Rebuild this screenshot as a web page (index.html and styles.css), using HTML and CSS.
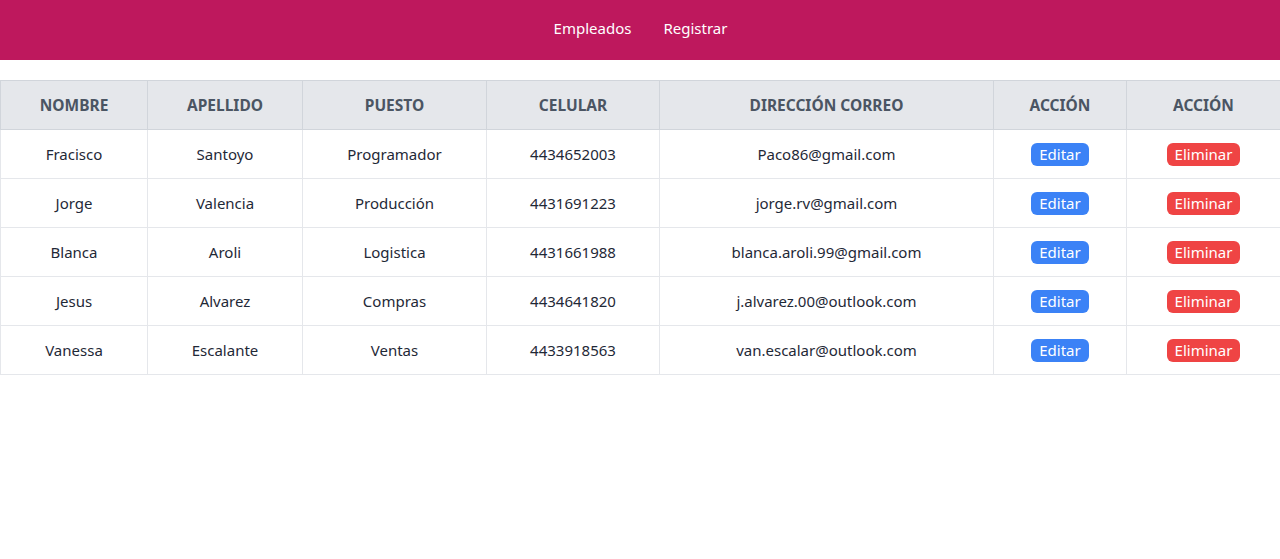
FILE: index.html
```html
<!DOCTYPE html>
<html lang="es">
<head>
<meta charset="utf-8">
<title>Empleados</title>
<link rel="stylesheet" href="styles.css">
</head>
<body>
<header class="topbar">
  <nav class="nav">
    <a class="nav-link" href="#">Empleados</a>
    <a class="nav-link" href="#">Registrar</a>
  </nav>
</header>
<main class="content">
  <table class="grid">
    <colgroup>
      <col class="c1"><col class="c2"><col class="c3"><col class="c4"><col class="c5"><col class="c6"><col class="c7">
    </colgroup>
    <thead>
      <tr>
        <th>Nombre</th><th>Apellido</th><th>Puesto</th><th>Celular</th><th>Dirección Correo</th><th>Acción</th><th>Acción</th>
      </tr>
    </thead>
    <tbody>
      <tr><td>Fracisco</td><td>Santoyo</td><td>Programador</td><td>4434652003</td><td>Paco86@gmail.com</td><td><button class="btn btn-edit">Editar</button></td><td><button class="btn btn-del">Eliminar</button></td></tr>
      <tr><td>Jorge</td><td>Valencia</td><td>Producción</td><td>4431691223</td><td>jorge.rv@gmail.com</td><td><button class="btn btn-edit">Editar</button></td><td><button class="btn btn-del">Eliminar</button></td></tr>
      <tr><td>Blanca</td><td>Aroli</td><td>Logistica</td><td>4431661988</td><td>blanca.aroli.99@gmail.com</td><td><button class="btn btn-edit">Editar</button></td><td><button class="btn btn-del">Eliminar</button></td></tr>
      <tr><td>Jesus</td><td>Alvarez</td><td>Compras</td><td>4434641820</td><td>j.alvarez.00@outlook.com</td><td><button class="btn btn-edit">Editar</button></td><td><button class="btn btn-del">Eliminar</button></td></tr>
      <tr><td>Vanessa</td><td>Escalante</td><td>Ventas</td><td>4433918563</td><td>van.escalar@outlook.com</td><td><button class="btn btn-edit">Editar</button></td><td><button class="btn btn-del">Eliminar</button></td></tr>
    </tbody>
  </table>
</main>
</body>
</html>
```
FILE: styles.css
```css
* { box-sizing: border-box; }
html, body { margin: 0; padding: 0; background: #ffffff; }
body {
  font-family: "Noto Sans", "Open Sans", "Liberation Sans", sans-serif;
  font-size: 15px;
  color: #1f2937;
}
.topbar {
  height: 60px;
  background: #be185d;
  display: flex;
  justify-content: center;
  padding-top: 17px;
}
.nav {
  display: flex;
  gap: 32px;
  padding-left: 1px;
}
.nav-link {
  color: #ffffff;
  text-decoration: none;
  font-size: 15px;
  line-height: 22px;
}
.content { padding-top: 20px; }
.grid {
  width: 100%;
  border-collapse: collapse;
  table-layout: fixed;
}
.c1 { width: 147px; }
.c2 { width: 155px; }
.c3 { width: 184px; }
.c4 { width: 173px; }
.c5 { width: 334px; }
.c6 { width: 133px; }
.c7 { width: 154px; }
.grid th {
  height: 49px;
  background: #e5e7eb;
  color: #4b5563;
  font-size: 15.5px;
  font-weight: 700;
  text-transform: uppercase;
  text-align: center;
  border: 1px solid #d1d5db;
  padding: 0 8px;
}
.grid td {
  height: 49px;
  text-align: center;
  border: 1px solid #e5e7eb;
  padding: 0 8px;
  color: #1f2937;
}
.btn {
  font: inherit;
  font-size: 15px;
  line-height: 23px;
  color: #ffffff;
  border: 0;
  border-radius: 6px;
  padding: 0 8px;
  cursor: pointer;
  vertical-align: middle;
}
.btn-edit { background: #3b82f6; }
.btn-del { background: #ef4444; }
```
